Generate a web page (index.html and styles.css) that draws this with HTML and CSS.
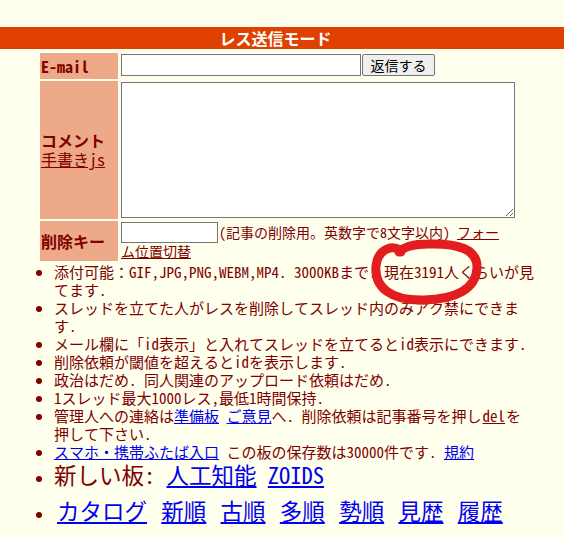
FILE: index.html
```html
<!DOCTYPE html>
<html lang="ja">
<head>
    <meta charset="UTF-8">
    <meta name="viewport" content="width=device-width, initial-scale=1.0">
    <title>レス送信モード</title>
    <link rel="stylesheet" href="styles.css">
</head>
<body>

<div class="mode-bar">レス送信モード</div>

<form class="post-form" onsubmit="return false">
    <table class="ftbl">
        <tr>
            <td class="ftdc">E-mail</td>
            <td class="ftdv"><input type="text" class="email"><input type="submit" class="send" value="返信する"></td>
        </tr>
        <tr>
            <td class="ftdc">コメント<br><a href="#" class="dark">手書きjs</a></td>
            <td class="ftdv"><textarea class="com"></textarea></td>
        </tr>
        <tr>
            <td class="ftdc">削除キー</td>
            <td class="ftdv"><div class="pwd-line"><input type="password" class="pwd"><span class="note">(記事の削除用。英数字で8文字以内)</span> <a href="#" class="dark">フォーム位置切替</a></div></td>
        </tr>
    </table>
</form>

<ul class="rules">
    <li>添付可能：GIF,JPG,PNG,WEBM,MP4. 3000KBまで. 現在3191人くらいが見てます.</li>
    <li>スレッドを立てた人がレスを削除してスレッド内のみアク禁にできます.</li>
    <li>メール欄に「id表示」と入れてスレッドを立てるとid表示にできます.</li>
    <li>削除依頼が閾値を超えるとidを表示します.</li>
    <li>政治はだめ. 同人関連のアップロード依頼はだめ.</li>
    <li>1スレッド最大1000レス,最低1時間保持.</li>
    <li>管理人への連絡は<a href="#">準備板</a> <a href="#">ご意見</a>へ. 削除依頼は記事番号を押し<span class="del">del</span>を押して下さい.</li>
    <li><a href="#">スマホ・携帯ふたば入口</a> この板の保存数は30000件です. <a href="#">規約</a></li>
    <li><span class="big">新しい板: <a href="#">人工知能</a> <a href="#">ZOIDS</a></span></li>
</ul>

<ul class="rules nav">
    <li><span class="big"><a href="#">カタログ</a> <a href="#">新順</a> <a href="#">古順</a> <a href="#">多順</a> <a href="#">勢順</a> <a href="#">見歴</a> <a href="#">履歴</a></span></li>
</ul>

<!-- hand drawn mark over the screenshot -->
<svg class="scribble" width="564" height="538" viewBox="0 0 564 538">
    <path d="M401 252 C396 244 378 247 376 266 C374 288 392 301 424 300 C456 299 476 289 477 268 C478 249 457 243 428 244 C414 244 405 246 399 252" fill="none" stroke="#e31d1f" stroke-width="9" stroke-linecap="round"/>
</svg>

</body>
</html>
```

FILE: styles.css
```css
body {
    margin: 0;
    padding-top: 27px;
    background-color: #ffffee;
    color: #800000;
    font-family: "Noto Sans Mono CJK JP", "Noto Sans CJK JP", monospace;
    position: relative;
}
a {
    color: #0000ee;
}
a.dark {
    color: #800000;
}
.mode-bar {
    height: 22px;
    line-height: 22px;
    background-color: #e04000;
    color: white;
    font-weight: bold;
    font-size: 16px;
    text-align: center;
    padding-right: 13px;
}
.post-form {
    margin: 2px 0 0 38px;
}
.ftbl {
    border-spacing: 2px;
}
.ftbl td {
    padding: 1px;
}
.ftdc {
    width: 76px;
    background-color: #eeaa88;
    font-weight: bold;
    font-size: 16px;
    line-height: 19px;
    vertical-align: middle;
}
.ftdc a {
    font-weight: normal;
}
.email {
    width: 240px;
    height: 22px;
    box-sizing: border-box;
    margin: 0;
    vertical-align: top;
    border: 1px solid #767676;
    background: white;
}
.send {
    width: 73px;
    height: 22px;
    margin: 0 0 0 1px;
    padding: 0;
    vertical-align: top;
    font-family: "Noto Sans CJK JP", sans-serif;
    font-size: 14px;
    background-color: #efefef;
    border: 1px solid #767676;
    border-radius: 2px;
}
.com {
    display: block;
    width: 394px;
    height: 136px;
    box-sizing: border-box;
    margin: 0;
    border: 1px solid #767676;
    background: white;
    resize: both;
}
.pwd-line {
    width: 385px;
    font-size: 14px;
    line-height: 17px;
}
.pwd {
    width: 97px;
    height: 21px;
    box-sizing: border-box;
    margin: 0 1px 0 0;
    vertical-align: top;
    border: 1px solid #767676;
    background: white;
}
.note {
    line-height: 21px;
}
.rules {
    margin: 0;
    padding-left: 54px;
    width: 480.5px;
    font-size: 15px;
    line-height: 18px;
}
.del {
    text-decoration: underline;
    padding: 0 1px;
}
.big {
    font-size: 22.5px;
    line-height: 27px;
}
.nav {
    margin-top: 9px;
}
.nav .big {
    padding-left: 3px;
}
.nav a {
    margin-right: 3px;
}
.scribble {
    position: absolute;
    left: 0;
    top: 0;
    pointer-events: none;
}
```
